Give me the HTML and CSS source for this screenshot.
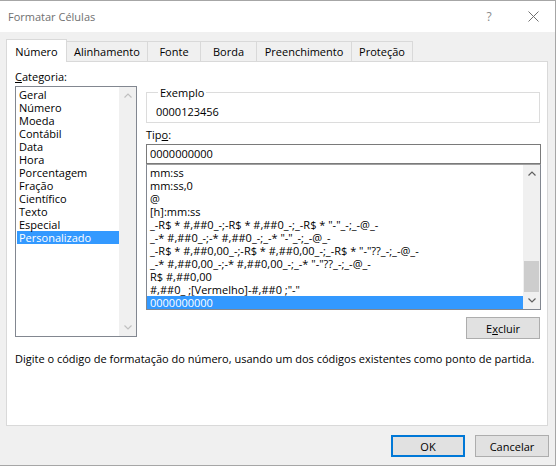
FILE: index.html
```html
<!DOCTYPE html>
<html lang="pt-BR">
<head>
<meta charset="utf-8">
<title>Formatar Células</title>
<link rel="stylesheet" href="styles.css">
</head>
<body>
<div class="dialog">
  <div class="titlebar">
    <span class="title">Formatar Células</span>
    <span class="help">?</span>
    <span class="close"><svg width="11" height="11" viewBox="0 0 11 11"><path d="M0.5 0.5 L10.5 10.5 M10.5 0.5 L0.5 10.5" stroke="#707070" stroke-width="1" fill="none"/></svg></span>
  </div>
  <div class="tabs">
    <div class="tab active t-numero">Número</div>
    <div class="tab t-alinh">Alinhamento</div>
    <div class="tab t-fonte">Fonte</div>
    <div class="tab t-borda">Borda</div>
    <div class="tab t-preench">Preenchimento</div>
    <div class="tab t-prot">Proteção</div>
  </div>
  <div class="panel">
    <div class="content">
      <div class="col-left">
        <div class="label"><u>C</u>ategoria:</div>
        <div class="listbox catlist">
          <ul class="items">
            <li>Geral</li>
            <li>Número</li>
            <li>Moeda</li>
            <li>Contábil</li>
            <li>Data</li>
            <li>Hora</li>
            <li>Porcentagem</li>
            <li>Fração</li>
            <li>Científico</li>
            <li>Texto</li>
            <li>Especial</li>
            <li class="selected">Personalizado</li>
          </ul>
          <div class="vscroll disabled">
            <span class="arrow"><svg width="8" height="5" viewBox="0 0 8 5"><path d="M0.5 4.5 L4 1 L7.5 4.5" stroke="currentColor" stroke-width="1.2" fill="none"/></svg></span>
            <span class="track"></span>
            <span class="arrow"><svg width="8" height="5" viewBox="0 0 8 5"><path d="M0.5 0.5 L4 4 L7.5 0.5" stroke="currentColor" stroke-width="1.2" fill="none"/></svg></span>
          </div>
        </div>
      </div>
      <div class="col-right">
        <fieldset class="sample">
          <legend>Exemplo</legend>
          <div class="sample-value">0000123456</div>
        </fieldset>
        <div class="label tipo">Tip<u>o</u>:</div>
        <div class="input">0000000000</div>
        <div class="listbox typelist">
          <ul class="items">
            <li>mm:ss</li>
            <li>mm:ss,0</li>
            <li>@</li>
            <li>[h]:mm:ss</li>
            <li>_-R$ * #,##0_-;-R$ * #,##0_-;_-R$ * "-"_-;_-@_-</li>
            <li>_-* #,##0_-;-* #,##0_-;_-* "-"_-;_-@_-</li>
            <li>_-R$ * #,##0,00_-;-R$ * #,##0,00_-;_-R$ * "-"??_-;_-@_-</li>
            <li>_-* #,##0,00_-;-* #,##0,00_-;_-* "-"??_-;_-@_-</li>
            <li>R$ #,##0,00</li>
            <li>#,##0_ ;[Vermelho]-#,##0 ;"-"</li>
            <li class="selected">0000000000</li>
          </ul>
          <div class="vscroll">
            <span class="arrow"><svg width="8" height="5" viewBox="0 0 8 5"><path d="M0.5 4.5 L4 1 L7.5 4.5" stroke="currentColor" stroke-width="1.2" fill="none"/></svg></span>
            <span class="track"><span class="thumb"></span></span>
            <span class="arrow"><svg width="8" height="5" viewBox="0 0 8 5"><path d="M0.5 0.5 L4 4 L7.5 0.5" stroke="currentColor" stroke-width="1.2" fill="none"/></svg></span>
          </div>
        </div>
        <div class="actions"><button class="btn">E<span class="und">x</span>cluir</button></div>
      </div>
    </div>
    <p class="desc">Digite o código de formatação do número, usando um dos códigos existentes como ponto de partida.</p>
  </div>
  <div class="footer">
    <button class="btn default">OK</button>
    <button class="btn">Cancelar</button>
  </div>
</div>
</body>
</html>
```

FILE: styles.css
```css
* { box-sizing: border-box; }
html, body { margin: 0; padding: 0; background: #ffffff; }
body {
  font-family: "Open Sans", "Noto Sans", sans-serif;
  font-size: 11px;
  color: #000;
}
ul { list-style: none; margin: 0; padding: 0; }

.dialog {
  width: 556px;
  height: 466px;
  background: #f0f0f0;
  border: 1px solid #a6a6a6;
  border-left: none;
  display: flex;
  flex-direction: column;
}

/* title bar */
.titlebar {
  flex: none;
  height: 31px;
  background: #fff;
  display: flex;
  align-items: center;
  padding-left: 8px;
  padding-right: 16px;
}
.title { flex: 1; color: #707070; font-size: 11px; }
.help { width: 12px; text-align: center; color: #8a8a8a; font-size: 12px; margin-right: 33px; }
.close { width: 11px; height: 11px; display: flex; }

/* tabs */
.tabs {
  flex: none;
  display: flex;
  align-items: flex-end;
  height: 22px;
  margin-top: 7px;
  padding-left: 6px;
}
.tab {
  height: 20px;
  line-height: 19px;
  text-align: center;
  border: 1px solid #d9d9d9;
  border-bottom: none;
  margin-left: -1px;
  background: #f0f0f0;
}
.tab:first-child { margin-left: 0; }
.tab.active {
  position: relative;
  z-index: 1;
  height: 23px;
  padding-top: 2px;
  margin-bottom: -1px;
  background: #fff;
}
.t-numero { width: 61px; }
.t-alinh { width: 82px; }
.t-fonte { width: 54px; }
.t-borda { width: 57px; }
.t-preench { width: 96px; }
.t-prot { width: 62px; }

/* panel */
.panel {
  flex: none;
  margin-left: 6px;
  width: 542px;
  height: 365px;
  background: #fff;
  border: 1px solid #d9d9d9;
  padding: 8px 6px 0 8px;
}
.content {
  display: grid;
  grid-template-columns: 122px 395px;
  column-gap: 9px;
}
.label { line-height: 14px; height: 14px; }

.listbox {
  display: flex;
  background: #fff;
}
.listbox .items { flex: 1; }
.listbox li { height: 13px; line-height: 13px; white-space: nowrap; }
.listbox li.selected { background: #3399ff; color: #fff; }

.catlist {
  margin-top: 2px;
  height: 251px;
  border: 1px solid #828790;
  padding: 1px 0 0 1px;
}
.catlist li { padding-left: 2px; }

.vscroll {
  width: 17px;
  background: #f0f0f0;
  display: flex;
  flex-direction: column;
  color: #606060;
}
.catlist .vscroll { margin-top: -1px; }
.vscroll.disabled { color: #c0c0c0; }
.vscroll .arrow {
  height: 17px;
  display: flex;
  align-items: center;
  justify-content: center;
}
.vscroll .track {
  flex: 1;
  display: flex;
  flex-direction: column;
  justify-content: flex-end;
  align-items: center;
}
.thumb { width: 15px; height: 31px; background: #cdcdcd; }

/* right column */
.col-right { display: flex; flex-direction: column; }
.sample {
  margin: 14px 1px 0 0;
  padding: 5px 8px 3px 8px;
  border: 1px solid #dcdcdc;
  min-inline-size: 0;
}
.sample legend {
  margin-left: 3px;
  padding: 2px 2px 0 2px;
  line-height: 14px;
}
.sample-value { line-height: 14px; padding-left: 1px; }
.tipo { margin-top: 5px; margin-bottom: 2px; }
.input {
  height: 20px;
  border: 1px solid #7a7a7a;
  line-height: 18px;
  padding-left: 3px;
}
.typelist {
  height: 146px;
  border: 1px solid #828790;
  border-top-color: #a0a0a0;
  overflow: hidden;
}
.typelist .items { padding-top: 1px; overflow: hidden; }
.typelist li { padding-left: 3px; }

.actions { display: flex; justify-content: flex-end; margin-top: 7px; margin-right: 1px; }

.btn {
  font-family: inherit;
  font-size: 11px;
  color: #000;
  width: 74px;
  height: 22px;
  padding: 0;
  background: #e1e1e1;
  border: 1px solid #adadad;
  border-radius: 0;
}
.btn .und { text-decoration: underline; }
.btn.default { border: 2px solid #0078d7; }

.desc { margin: 13px 0 0 0; line-height: 14px; }

.footer {
  flex: none;
  display: flex;
  justify-content: flex-end;
  gap: 10px;
  margin-top: 9px;
  padding-right: 6px;
}
```
